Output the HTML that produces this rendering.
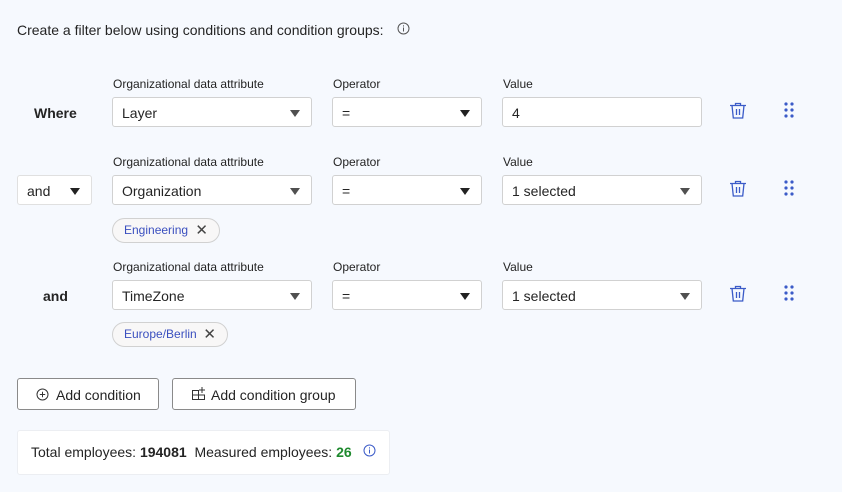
<!DOCTYPE html>
<html><head><style>
body{margin:0;width:842px;height:492px;background:#f6f9fe;font-family:"Liberation Sans",sans-serif;color:#242424;position:relative;overflow:hidden}
.a{position:absolute}
.lbl{font-size:12px;color:#242424}
.box{position:absolute;height:30px;background:#fff;border:1px solid #d1d1d1;border-radius:3px;box-sizing:border-box;font-size:14px;line-height:30px;padding-left:9px}
.box .c{position:absolute;right:11px;top:12px;width:0;height:0;border-left:5px solid transparent;border-right:5px solid transparent;border-top:7px solid #505050}
.chip{position:absolute;height:25px;border:1px solid #d1d1d1;border-radius:13px;background:#f8f7f7;font-size:12px;color:#3a4fbf;line-height:23px;padding-left:11px;box-sizing:border-box}
.chip span{position:absolute;right:11px;top:0;color:#444;font-size:15px}
.btn{position:absolute;height:32px;border:1px solid #8a8a8a;border-radius:3px;background:#fff;box-sizing:border-box;font-size:14px;line-height:30px}
b{font-weight:bold}
</style></head><body>
<div class="a" style="left:17px;top:22px;font-size:14px">Create a filter below using conditions and condition groups:</div>
<svg class="a" style="left:397px;top:22px" width="13" height="13" viewBox="0 0 13 13"><circle cx="6.5" cy="6.5" r="5.5" fill="none" stroke="#555" stroke-width="1"/><rect x="6" y="5.5" width="1" height="4" fill="#555"/><rect x="6" y="3.3" width="1" height="1.2" fill="#555"/></svg>

<div class="a" style="left:34px;top:105px;font-size:14px;font-weight:bold">Where</div>
<div class="a lbl" style="left:113px;top:77px">Organizational data attribute</div>
<div class="a lbl" style="left:333px;top:77px">Operator</div>
<div class="a lbl" style="left:503px;top:77px">Value</div>
<div class="box" style="left:112px;top:97px;width:200px">Layer<div class="c"></div></div>
<div class="box" style="left:332px;top:97px;width:150px">=<div class="c" style="border-top-color:#222"></div></div>
<div class="box" style="left:502px;top:97px;width:200px">4</div>

<div class="box" style="left:17px;top:175px;width:75px;border-color:#e0e0e0">and<div class="c" style="border-top-color:#222"></div></div>
<div class="a lbl" style="left:113px;top:155px">Organizational data attribute</div>
<div class="a lbl" style="left:333px;top:155px">Operator</div>
<div class="a lbl" style="left:503px;top:155px">Value</div>
<div class="box" style="left:112px;top:175px;width:200px">Organization<div class="c"></div></div>
<div class="box" style="left:332px;top:175px;width:150px">=<div class="c" style="border-top-color:#222"></div></div>
<div class="box" style="left:502px;top:175px;width:200px">1 selected<div class="c"></div></div>
<div class="chip" style="left:112px;top:218px;width:108px">Engineering<span>✕</span></div>

<div class="a" style="left:43px;top:288px;font-size:14px;font-weight:bold">and</div>
<div class="a lbl" style="left:113px;top:260px">Organizational data attribute</div>
<div class="a lbl" style="left:333px;top:260px">Operator</div>
<div class="a lbl" style="left:503px;top:260px">Value</div>
<div class="box" style="left:112px;top:280px;width:200px">TimeZone<div class="c"></div></div>
<div class="box" style="left:332px;top:280px;width:150px">=<div class="c" style="border-top-color:#222"></div></div>
<div class="box" style="left:502px;top:280px;width:200px">1 selected<div class="c"></div></div>
<div class="chip" style="left:112px;top:322px;width:116px">Europe/Berlin<span>✕</span></div>

<svg width="0" height="0" style="position:absolute"><defs>
<g id="tr"><path d="M1 4.5h16M6.5 4.5V2.5h5v2M3 4.5l1.3 12.5h9.4L15 4.5M7.5 8v6M10.5 8v6" fill="none" stroke="#3b5bc8" stroke-width="1.3"/></g>
<g id="dt" fill="#3b5bc8"><circle cx="2" cy="2" r="1.6"/><circle cx="8" cy="2" r="1.6"/><circle cx="2" cy="8" r="1.6"/><circle cx="8" cy="8" r="1.6"/><circle cx="2" cy="14" r="1.6"/><circle cx="8" cy="14" r="1.6"/></g>
</defs></svg>
<svg class="a" style="left:729px;top:101px" width="18" height="19"><use href="#tr"/></svg>
<svg class="a" style="left:784px;top:102px" width="10" height="16"><use href="#dt"/></svg>
<svg class="a" style="left:729px;top:179px" width="18" height="19"><use href="#tr"/></svg>
<svg class="a" style="left:784px;top:180px" width="10" height="16"><use href="#dt"/></svg>
<svg class="a" style="left:729px;top:284px" width="18" height="19"><use href="#tr"/></svg>
<svg class="a" style="left:784px;top:285px" width="10" height="16"><use href="#dt"/></svg>

<div class="btn" style="left:17px;top:378px;width:142px"><svg class="a" style="left:18px;top:9px" width="13" height="13"><circle cx="6.5" cy="6.5" r="5.5" fill="none" stroke="#333"/><path d="M6.5 3.8v5.4M3.8 6.5h5.4" stroke="#333"/></svg><span class="a" style="left:38px;top:1px">Add condition</span></div>
<div class="btn" style="left:172px;top:378px;width:184px"><svg class="a" style="left:18px;top:7px" width="15" height="15"><path d="M1.5 4.5h6v9h-6zM7.5 9h6v4.5h-6M1.5 9h6" fill="none" stroke="#333"/><path d="M11 1v6M8 4h6" stroke="#333"/></svg><span class="a" style="left:38px;top:1px">Add condition group</span></div>

<div class="a" style="left:17px;top:430px;width:373px;height:45px;background:#fff;border:1px solid #eceef2;border-radius:3px;box-sizing:border-box;font-size:14px;line-height:43px;padding-left:13px">Total employees: <b>194081</b>&nbsp; Measured employees: <b style="color:#1f8a2e">26</b></div>
<svg class="a" style="left:363px;top:444px" width="13" height="13"><circle cx="6.5" cy="6.5" r="5.5" fill="none" stroke="#3b5bc8"/><rect x="6" y="5.5" width="1" height="4" fill="#3b5bc8"/><rect x="6" y="3.3" width="1" height="1.2" fill="#3b5bc8"/></svg>
</body></html>
